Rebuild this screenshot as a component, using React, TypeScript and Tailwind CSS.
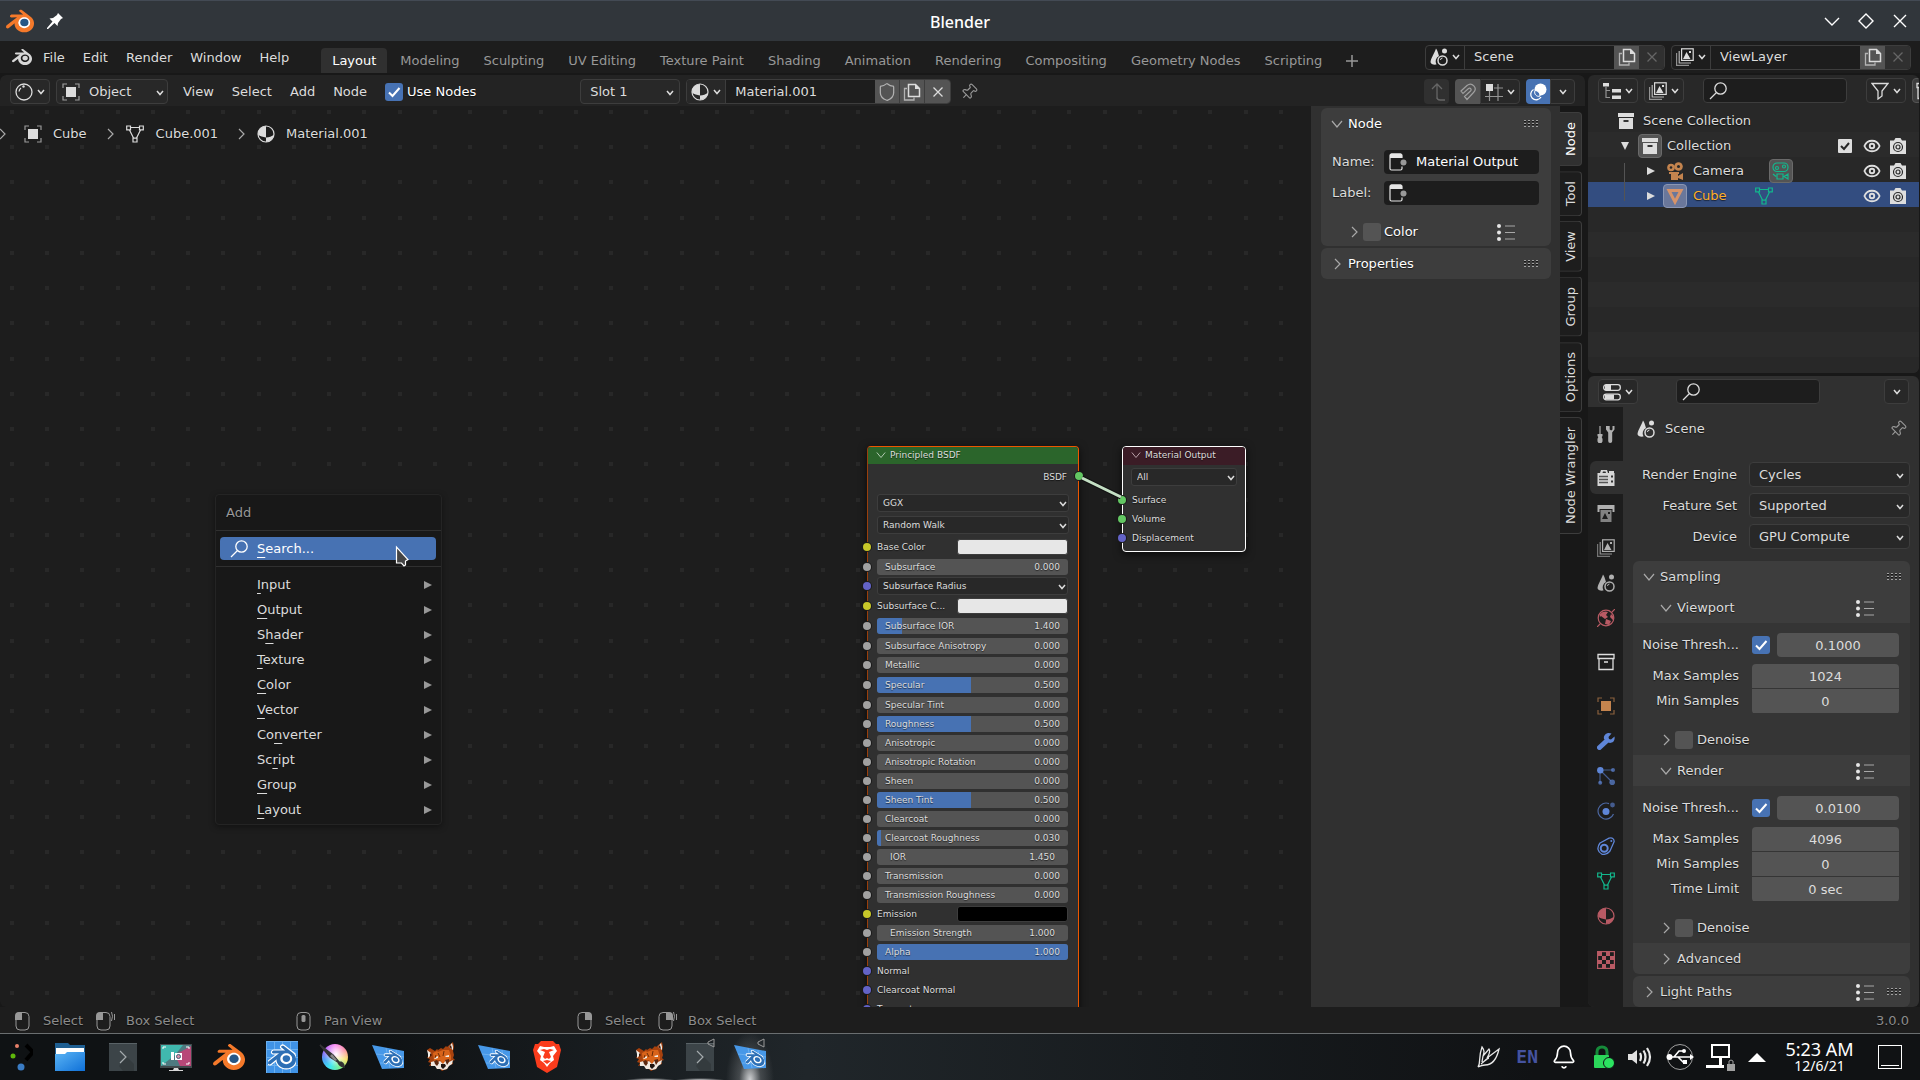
import type { ReactNode } from "react";
import { SiBlender } from "react-icons/si";
import { Shield, Pin, Bell, Eye } from "lucide-react";

type IconProps = { className?: string };

function Svg({ className = "", children }: { className?: string; children: ReactNode }) {
  return (
    <svg
      viewBox="0 0 18 18"
      fill="none"
      stroke="currentColor"
      className={`size-[18px] shrink-0 ${className}`}
      aria-hidden="true"
    >
      {children}
    </svg>
  );
}

/* ---------- icons ---------- */

const Chevron = ({ className = "" }: IconProps) => (
  <svg viewBox="0 0 8 6" fill="none" stroke="currentColor" strokeWidth="1.5" className={`h-[6px] w-2 shrink-0 ${className}`} aria-hidden="true">
    <path d="M1 1l3 3.5L7 1" />
  </svg>
);

const Fold = ({ open, className = "" }: { open?: boolean; className?: string }) => (
  <svg viewBox="0 0 12 12" fill="none" stroke="currentColor" strokeWidth="1.2" className={`size-3 shrink-0 text-[#a8a8a8] ${className}`} aria-hidden="true">
    <path d={open ? "M1 3l5 6 5-6" : "M4 1l5 5-5 5"} />
  </svg>
);

const Triangle = ({ className = "" }: IconProps) => (
  <svg viewBox="0 0 8 8" className={`size-2 shrink-0 fill-current ${className}`} aria-hidden="true">
    <path d="M0 0l8 4-8 4z" />
  </svg>
);

const Grip = () => (
  <svg viewBox="0 0 15 7" className="h-[7px] w-[15px] shrink-0" aria-hidden="true">
    {[0, 4, 8, 12].map((x) => (
      <g key={x}>
        <path d={`M${x} 0h2v1h-2zM${x} 3h2v1h-2zM${x} 6h2v1h-2z`} fill="#a0a0a0" />
        <path d={`M${x} 1h2v1h-2zM${x} 4h2v1h-2z`} fill="#151515" />
      </g>
    ))}
  </svg>
);

const Presets = () => (
  <Svg className="text-[#a8a8a8]">
    <path d="M8 3h10M8 9.500h10M8 16h10" strokeWidth="1.2" />
    <g fill="#e6e6e6" stroke="none">
      <circle cx="2" cy="3" r="2" />
      <circle cx="2" cy="9.500" r="2" />
      <circle cx="2" cy="16" r="2" />
    </g>
  </Svg>
);

const ObjectIcon = ({ className = "" }: IconProps) => (
  <Svg className={className}>
    <path d="M1 5V1h4M13 1h4v4M17 13v4h-4M5 17H1v-4" strokeOpacity=".65" strokeWidth="1.2" />
    <rect x="4" y="4" width="10" height="10" fill="currentColor" stroke="none" />
  </Svg>
);

const MeshIcon = ({ className = "" }: IconProps) => (
  <Svg className={className}>
    <path d="M5 2.500h8M3.500 5L7.500 13M14.500 5L10.500 13" strokeWidth="1.200" />
    <path d="M.7 1h3.800v3.800H.7zM13.500 1h3.800v3.800h-3.800zM7 13.200h4V17H7z" strokeWidth="1.200" />
  </Svg>
);

const MaterialIcon = ({ className = "" }: IconProps) => (
  <Svg className={className}>
    <circle cx="9" cy="9" r="8" strokeWidth="1.200" />
    <path d="M9 1v11.500C6 12 3 11.500 1 9.500A8 8 0 0 1 9 1zM9 12.500c3-.3 6-.8 8-3A8 8 0 0 1 9 17z" fill="currentColor" stroke="none" />
  </Svg>
);

const SceneIcon = ({ className = "" }: IconProps) => (
  <Svg className={className}>
    <g fill="currentColor" stroke="none">
      <path d="M6 .5C4.500 5 1 10 .5 14c0 2 3 3 6 2.500A6 6 0 0 1 9 8C8 5 7.500 2 6 .5z" />
      <circle cx="14.500" cy="3" r="2.500" />
    </g>
    <circle cx="12.500" cy="12.500" r="4.500" strokeWidth="1.500" />
    <path d="M10.500 12a2 2 0 0 1 2-2" />
  </Svg>
);

const LayersIcon = ({ className = "" }: IconProps) => (
  <Svg className={className}>
    <path d="M.6 5v12.400H13" strokeOpacity=".6" strokeWidth="1.200" />
    <path d="M3.200 3v12H15" strokeOpacity=".8" strokeWidth="1.200" />
    <rect x="5.600" y=".8" width="11.600" height="11.600" strokeWidth="1.200" />
    <path d="M7 11l3.500-7 4 7zM13 3h2v2h-2z" fill="currentColor" stroke="none" />
  </Svg>
);

const CopyIcon = ({ className = "" }: IconProps) => (
  <Svg className={className}>
    <path d="M4 5.500H1.500v11.500H11v-2.500" strokeOpacity=".7" strokeWidth="1.300" />
    <path d="M5.500 1.500h7l4 4v8h-11z" strokeWidth="1.500" />
    <path d="M12 1v5h5z" fill="currentColor" stroke="none" />
  </Svg>
);

const CloseIcon = ({ className = "" }: IconProps) => (
  <Svg className={className}>
    <path d="M4.500 4.500l9 9M13.500 4.500l-9 9" strokeWidth="1.300" />
  </Svg>
);

const SearchIcon = ({ className = "" }: IconProps) => (
  <Svg className={className}>
    <circle cx="11.500" cy="6.500" r="5.700" strokeWidth="1.300" />
    <path d="M7.500 10.500L1 17" strokeWidth="1.300" />
  </Svg>
);

const BoxIcon = ({ className = "" }: IconProps) => (
  <Svg className={className}>
    <path d="M1 1h16v4H1zM2 6h14v11H2z" fill="currentColor" stroke="none" />
    <path d="M6.500 9h5" stroke="#333" strokeWidth="2" />
  </Svg>
);

const BoxOutlineIcon = ({ className = "" }: IconProps) => (
  <Svg className={className}>
    <path d="M1 1.500h16v4H1zM2 5.500h14v11H2zM7 9h4" strokeWidth="1.300" />
  </Svg>
);

const NodeIcon = () => (
  <Svg className="text-[#e6e6e6]">
    <path d="M13 5v-2.500q0-1.500-1.500-1.500h-9q-1.500 0-1.500 1.500v13q0 1.500 1.500 1.500h9q1.500 0 1.500-1.500v-2" strokeWidth="1.200" />
    <path d="M1 5V2q0-1.500 1.500-1.500h9Q13 .5 13 2v3z" fill="currentColor" stroke="none" />
    <circle cx="14.500" cy="9.500" r="3" fill="#999" stroke="none" />
  </Svg>
);

const ShaderIcon = () => (
  <Svg>
    <circle cx="9" cy="9" r="8" strokeWidth="1.300" />
    <path d="M4 8.500A5.500 5.500 0 0 1 6 5" strokeWidth="1.300" />
    <circle cx="8.500" cy="3.500" r="1.200" fill="currentColor" stroke="none" />
  </Svg>
);

const MagnetIcon = () => (
  <Svg className="text-[#a0a0a0]">
    <path d="M2 8l6-5.500c5-4 11 2.500 6.500 7L8 16.500l-2.500-3 6-5.500c1.500-1.500 0-3.500-2-2.500L4 10.500z" strokeWidth="1.200" />
  </Svg>
);

const SnapIcon = () => (
  <Svg>
    <path d="M4.500 7v11M13 1v17M0 13.500h18M9 5h9" strokeOpacity=".6" strokeWidth="1.200" />
    <rect x="1" y="1" width="7" height="7" fill="currentColor" stroke="none" />
  </Svg>
);

const OverlayIcon = () => (
  <Svg className="text-white">
    <circle cx="11.500" cy="6.500" r="6" fill="currentColor" stroke="none" />
    <path d="M4.500 6.500a5.500 5.500 0 1 0 7.500 7.500" strokeWidth="1.300" />
    <path d="M6 7.500a5 5 0 0 1 5 5.500c-3 1.500-6.500-2-5-5.500z" fill="#4772b3" stroke="#fff" />
  </Svg>
);

const TreeIcon = () => (
  <Svg>
    <path d="M3 5v10.500h4M3 8.500h4" strokeOpacity=".6" strokeWidth="1.200" />
    <path d="M0 1h6v3.500H0zM9 7h9v3.500H9zM9 13.500h9V17H9z" fill="currentColor" stroke="none" />
  </Svg>
);

const FilterIcon = () => (
  <Svg>
    <path d="M1 1.500h16L11 9v5l-4 3V9z" strokeWidth="1.300" />
  </Svg>
);

const TogglesIcon = () => (
  <Svg>
    <rect x=".7" y="1.700" width="16.600" height="5.600" rx="2.500" strokeWidth="1.300" />
    <rect x=".7" y="11.200" width="16.600" height="5.600" rx="2.500" strokeWidth="1.300" />
    <path d="M2 2h6v5H2zM2 11.500h9v5H2z" fill="currentColor" stroke="none" />
  </Svg>
);

const PhotoIcon = () => (
  <Svg className="text-[#dedede]">
    <path d="M1 3.500h4L6.500 1h5L13 3.500h4v13.500H1z" fill="currentColor" stroke="none" />
    <circle cx="9" cy="10" r="4.500" stroke="#2b2b2b" strokeWidth="1.200" />
    <circle cx="9" cy="10" r="2" stroke="#2b2b2b" strokeWidth="1.200" />
  </Svg>
);

const MovieIcon = ({ outline, className = "" }: { outline?: boolean; className?: string }) => (
  <Svg className={className}>
    {outline ? (
      <g strokeWidth="1.200">
        <rect x="1" y="1" width="15" height="8.500" rx="4" />
        <circle cx="5" cy="6" r="1.500" />
        <circle cx="12" cy="4.500" r="1.500" />
        <path d="M5 12h6v5H5zM12 14.500l4-2.500v5zM1 12l3 2.500" />
      </g>
    ) : (
      <g fill="currentColor" stroke="none">
        <circle cx="5" cy="5.500" r="3.800" />
        <circle cx="12.500" cy="4.500" r="4.300" />
        <path d="M3 10h10v2h-1v2l5-3v7l-5-2v2H5v-6H3z" />
        <circle cx="5" cy="5.500" r="1.300" fill="#282828" />
        <circle cx="12.500" cy="4.500" r="1.500" fill="#282828" />
      </g>
    )}
  </Svg>
);

const ToolIcon = () => (
  <Svg>
    <path d="M3 1v8" strokeWidth="1.200" />
    <path d="M.5 9h5v2l-.8 1q1.300 1.500.8 4.500l-1 1.500h-3L.5 16.500Q0 13.500 1.300 12l-.8-1zM9 1v3.500l2.200 3V16q0 2 2 2t2-2V7.500l2.300-3V1l-2 0v3.500l-1.300 1-1.500-1V1z" fill="currentColor" stroke="none" />
  </Svg>
);

const RenderIcon = () => (
  <Svg className="text-[#d6d6d6]">
    <path d="M.5 4h2.500l1-3h6l1 3h1V2h5v2h.5v13H.5z" fill="currentColor" stroke="none" />
    <path d="M5.500 4l.5-1.500h2.500l.5 1.500z" fill="#303030" stroke="none" />
    <path d="M2 7.500h9M2 10.500h9M2 13.500h9" stroke="#555" strokeWidth="1.500" />
    <path d="M14 6.500h2v2h-2zM14 11.500h2v2h-2z" fill="#333" stroke="none" />
  </Svg>
);

const OutputIcon = () => (
  <Svg>
    <path d="M.5 1h17v7h-2V5h-13v3h-2z" fill="currentColor" stroke="none" />
    <path d="M3.500 6h11v12h-11z" fill="#828282" stroke="none" />
    <path d="M5 15l3-6 3 6zM11 8h2v2h-2z" fill="#1d1d1d" stroke="none" />
  </Svg>
);

const WorldIcon = () => (
  <Svg>
    <circle cx="9" cy="9" r="7.800" strokeWidth="1.200" />
    <path d="M0 18l3-3M15 3l3-3" strokeWidth="1.200" />
    <path d="M3 5c3-3 6-3 8-2l-2 3 2 2-3 2-4-3-1 1zM9 10l5 2-2 4-4-1zM14 5l3 3-1 3-3-3z" fill="currentColor" stroke="none" />
  </Svg>
);

const WrenchIcon = () => (
  <Svg>
    <path d="M2.500 15.500L9 9.500" strokeWidth="5" strokeLinecap="round" />
    <path d="M14.500 1.500l-3 3.500.5 2 2 .5 3.500-3c1 5-3 7.500-6.500 6L7 7c-1-4 3-7.500 7.500-5.500z" fill="currentColor" stroke="none" />
  </Svg>
);

const ParticlesIcon = () => (
  <Svg>
    <path d="M3 6v10M6 3h10M5 5l9 9" strokeOpacity=".6" strokeWidth="1.200" />
    <g fill="currentColor" stroke="none">
      <circle cx="3.300" cy="3.300" r="3.200" />
      <g opacity=".7">
        <circle cx="3.200" cy="15.800" r="2" />
        <circle cx="16" cy="3" r="2" />
        <circle cx="15.200" cy="15.200" r="2.800" />
      </g>
    </g>
  </Svg>
);

const PhysicsIcon = () => (
  <Svg>
    <path d="M12 1.600A8 8 0 1 0 16.500 12" strokeOpacity=".7" strokeWidth="1.200" />
    <circle cx="9" cy="9.500" r="3.500" fill="currentColor" stroke="none" />
    <circle cx="15.500" cy="3" r="2.400" fill="currentColor" fillOpacity=".6" stroke="none" />
  </Svg>
);

const ConstraintIcon = () => (
  <Svg>
    <path d="M3 6l9-4.800q5-1.200 5.200 3.300L13 14q-3 4-8 3.300Q-2 13 3 6z" strokeWidth="1.300" />
    <circle cx="7.200" cy="11.200" r="3.500" strokeWidth="2" />
    <circle cx="14.300" cy="4" r="1" fill="currentColor" stroke="none" />
  </Svg>
);

const TextureIcon = () => (
  <Svg>
    <rect x=".6" y=".6" width="16.800" height="16.800" strokeWidth="1.200" />
    <path
      d="M1 1h4v4H1zM9 1h4v4H9zM5 5h4v4H5zM13 5h4v4h-4zM1 9h4v4H1zM9 9h4v4H9zM5 13h4v4H5zM13 13h4v4h-4z"
      fill="currentColor"
      stroke="none"
    />
  </Svg>
);

/* ---------- shared controls ---------- */

function SelectBox({ label, value, className = "" }: { label: string; value: string; className?: string }) {
  return (
    <div className={`relative h-[25px] rounded border border-[#3d3d3d] bg-[#282828] ${className}`}>
      <select aria-label={label} className="h-full w-full appearance-none bg-transparent pr-5 pl-[9px] outline-none">
        <option>{value}</option>
      </select>
      <Chevron className="pointer-events-none absolute top-[10px] right-[5px]" />
    </div>
  );
}

function IconButton({ label, className = "", children }: { label: string; className?: string; children: ReactNode }) {
  return (
    <button aria-label={label} className={`flex h-[25px] shrink-0 items-center justify-center ${className}`}>
      {children}
    </button>
  );
}

function MenuIconButton({ label, className = "", children }: { label: string; className?: string; children: ReactNode }) {
  return (
    <IconButton label={label} className={`w-10 gap-1 rounded border border-[#3d3d3d] bg-[#282828] ${className}`}>
      {children}
      <Chevron />
    </IconButton>
  );
}

function CheckBox({ id, label, checked }: { id: string; label: string; checked?: boolean }) {
  return (
    <span className="relative size-[18px] shrink-0">
      <input
        id={id}
        type="checkbox"
        aria-label={label}
        defaultChecked={checked}
        className="peer block size-full appearance-none rounded-[3px] bg-[#545454] checked:bg-[#4772b3]"
      />
      <svg viewBox="0 0 18 18" className="pointer-events-none absolute inset-0 hidden peer-checked:block" fill="none" stroke="#fff" strokeWidth="2" aria-hidden="true">
        <path d="M4 9.500l3.500 3.500L14.500 5" />
      </svg>
    </span>
  );
}

function DataBlock({ label, value, icon }: { label: string; value: string; icon: ReactNode }) {
  return (
    <div className="flex h-[25px] w-[240px] overflow-hidden rounded border border-[#3d3d3d] bg-[#1d1d1d]">
      <button aria-label={`Browse ${label}`} className="flex w-[39px] items-center justify-center gap-1 border-r border-[#3d3d3d]">
        {icon}
        <Chevron />
      </button>
      <input aria-label={label} defaultValue={value} className="w-[149px] bg-transparent pl-[9px] outline-none" />
      <button aria-label={`New ${label}`} className="flex w-[25px] items-center justify-center bg-[#545454]">
        <CopyIcon />
      </button>
      <button aria-label={`Remove ${label}`} className="flex w-[25px] items-center justify-center bg-[#303030] text-[#666]">
        <CloseIcon />
      </button>
    </div>
  );
}

/* ---------- window chrome ---------- */

function BlenderLogo({ className = "" }: IconProps) {
  return (
    <span className={`relative block ${className}`}>
      <svg viewBox="0 0 24 24" className="absolute inset-0 size-full" aria-hidden="true">
        <circle cx="15.700" cy="13.400" r="5.500" fill="#fff" />
      </svg>
      <SiBlender className="absolute inset-0 size-full text-[#f5792a]" />
      <svg viewBox="0 0 24 24" className="absolute inset-0 size-full" aria-hidden="true">
        <ellipse cx="15.750" cy="13.360" rx="3.500" ry="3.200" fill="#265787" />
      </svg>
    </span>
  );
}

function TitleBar() {
  return (
    <header className="relative flex h-[41px] items-center justify-between border-t border-[#434a54] bg-[#31363b] px-[6px] font-['Noto_Sans',sans-serif] text-white">
      <div className="flex items-center gap-[13px]">
        <BlenderLogo className="size-7" />
        <svg viewBox="0 0 16 16" className="size-4 fill-white" aria-hidden="true">
          <path d="M11 0l5 5-2 1-3 4-.5 3-3-3L1 16l-1 0 0-1 5.500-6.500-3-3L6 5l4-3z" />
        </svg>
      </div>
      <h1 className="absolute inset-x-0 pt-[2px] text-center text-base font-medium">Blender</h1>
      <div className="relative flex items-center gap-[18px] pr-[6px]">
        {[
          ["Minimize", "M1 5l7 7 7-7"],
          ["Maximize", "M8 1l7 7-7 7-7-7z"],
          ["Close", "M2 2l12 12M14 2L2 14"],
        ].map(([label, d]) => (
          <button key={label} aria-label={label}>
            <svg viewBox="0 0 16 16" className="size-4" fill="none" stroke="#fff" strokeWidth="1.400">
              <path d={d} />
            </svg>
          </button>
        ))}
      </div>
    </header>
  );
}

const MENUS = ["File", "Edit", "Render", "Window", "Help"];
const WORKSPACES = [
  "Layout",
  "Modeling",
  "Sculpting",
  "UV Editing",
  "Texture Paint",
  "Shading",
  "Animation",
  "Rendering",
  "Compositing",
  "Geometry Nodes",
  "Scripting",
];

function TopBar() {
  return (
    <div className="flex h-8 items-center justify-between pr-[9px] pl-3">
      <div className="flex h-full items-center">
        <SiBlender className="mr-[2px] size-5 text-[#d8d8d8]" />
        <nav className="flex pt-[2px]">
          {MENUS.map((m) => (
            <button key={m} className="px-[9px]">
              {m}
            </button>
          ))}
        </nav>
        <div className="ml-[23px] flex h-full items-end gap-[2px]">
          {WORKSPACES.map((w, i) => (
            <button
              key={w}
              className={`h-[25px] rounded-t px-[11px] ${i === 0 ? "bg-[#303030] text-white" : "text-[#989898]"}`}
            >
              {w}
            </button>
          ))}
          <button aria-label="Add workspace" className="flex h-[25px] w-[34px] items-center justify-center text-[#989898]">
            <svg viewBox="0 0 12 12" className="size-3" stroke="currentColor" strokeWidth="1.500">
              <path d="M6 0v12M0 6h12" />
            </svg>
          </button>
        </div>
      </div>
      <div className="flex gap-[6px]">
        <DataBlock label="Scene" value="Scene" icon={<SceneIcon />} />
        <DataBlock label="View layer" value="ViewLayer" icon={<LayersIcon />} />
      </div>
    </div>
  );
}

/* ---------- shader editor ---------- */

function EditorHeader() {
  return (
    <div className="flex h-[31px] items-start justify-between rounded-t-md bg-[#232323] px-[10px] pt-1">
      <div className="flex items-center">
        <MenuIconButton label="Editor type">
          <ShaderIcon />
        </MenuIconButton>
        <div className="relative ml-[6px] h-[25px] w-28 rounded border border-[#3d3d3d] bg-[#282828]">
          <ObjectIcon className="pointer-events-none absolute top-[3px] left-[5px]" />
          <select aria-label="Shader type" className="h-full w-full appearance-none bg-transparent pl-8 outline-none">
            <option>Object</option>
          </select>
          <Chevron className="pointer-events-none absolute top-[10px] right-[3px]" />
        </div>
        <nav className="ml-[6px] flex">
          {["View", "Select", "Add", "Node"].map((m) => (
            <button key={m} className="px-[9px]">
              {m}
            </button>
          ))}
        </nav>
        <div className="ml-[9px] flex items-center gap-1 text-white">
          <CheckBox id="use-nodes" label="Use Nodes" checked />
          <label htmlFor="use-nodes">Use Nodes</label>
        </div>
        <SelectBox label="Material slot" value="Slot 1" className="ml-[104px] w-[100px]" />
        <div className="ml-[6px] flex h-[25px] overflow-hidden rounded border border-[#3d3d3d] bg-[#1d1d1d]">
          <button aria-label="Browse material" className="flex w-[39px] items-center justify-center gap-1 border-r border-[#3d3d3d] bg-[#282828]">
            <MaterialIcon />
            <Chevron />
          </button>
          <input aria-label="Material name" defaultValue="Material.001" className="w-[149px] bg-transparent pl-[9px] outline-none" />
          <div className="flex divide-x divide-[#3d3d3d] bg-[#545454]">
            <button aria-label="Fake user" className="flex w-[25px] items-center justify-center text-[#b0b0b0]">
              <Shield size={20} strokeWidth={1.5} />
            </button>
            <button aria-label="New material" className="flex w-[25px] items-center justify-center">
              <CopyIcon />
            </button>
            <button aria-label="Unlink material" className="flex w-[25px] items-center justify-center">
              <CloseIcon />
            </button>
          </div>
        </div>
        <IconButton label="Pin" className="ml-[9px] text-[#989898]">
          <Pin size={18} strokeWidth={1.5} className="rotate-45" />
        </IconButton>
      </div>
      <div className="flex">
        <IconButton label="Parent node tree" className="w-[25px] rounded bg-[#303030] text-[#666]">
          <Svg>
            <path d="M9 16V1M4 6l5-5 5 5M9 11v3q0 3 3 3h5" strokeWidth="1.300" />
          </Svg>
        </IconButton>
        <IconButton label="Snap" className="ml-[6px] w-[25px] rounded-l bg-[#545454]">
          <MagnetIcon />
        </IconButton>
        <IconButton label="Snap target" className="w-10 gap-1 rounded-r border border-[#3d3d3d] bg-[#282828]">
          <SnapIcon />
          <Chevron />
        </IconButton>
        <IconButton label="Overlays" className="ml-[6px] w-6 rounded-l bg-[#4772b3]">
          <OverlayIcon />
        </IconButton>
        <IconButton label="Overlay options" className="w-[25px] rounded-r border border-[#3d3d3d] bg-[#282828]">
          <Chevron />
        </IconButton>
      </div>
    </div>
  );
}

function CanvasDots() {
  return (
    <svg className="absolute inset-0 size-full" aria-hidden="true">
      <defs>
        <pattern id="dots" x="10" y="4" width="141" height="141" patternUnits="userSpaceOnUse">
          {[0, 35, 70, 106].map((x) =>
            [0, 35, 70, 106].map((y) => <rect key={`${x}-${y}`} x={x} y={y} width="4" height="4" fill="#282828" />)
          )}
        </pattern>
      </defs>
      <rect width="100%" height="100%" fill="url(#dots)" />
    </svg>
  );
}

function Breadcrumb() {
  return (
    <div className="absolute top-[18px] left-0 flex h-5 items-center">
      <Fold className="-ml-1 text-[#a8a8a8]" />
      <ObjectIcon className="mr-[11px] ml-4" />
      Cube
      <Fold className="mr-[10px] ml-[17px]" />
      <MeshIcon className="mr-3" />
      Cube.001
      <Fold className="mr-[10px] ml-[17px]" />
      <MaterialIcon className="mr-[11px]" />
      Material.001
    </div>
  );
}

const SOCKET = {
  yellow: "bg-[#c7c729]",
  gray: "bg-[#a1a1a1]",
  violet: "bg-[#6363c7]",
  green: "bg-[#63c763]",
};

function Socket({ color, side = "left" }: { color: keyof typeof SOCKET; side?: "left" | "right" }) {
  return (
    <span
      className={`absolute top-1/2 size-2 -translate-y-1/2 rounded-full ring-1 ring-[#1a1a1a] ${SOCKET[color]} ${
        side === "left" ? "-left-[5px]" : "-right-[5px]"
      }`}
    />
  );
}

type Row = {
  kind: "slider" | "number" | "color" | "select" | "plain";
  name: string;
  socket: keyof typeof SOCKET;
  value?: string;
  fill?: number;
  swatch?: string;
  tall?: boolean;
};

const ROWS: Row[] = [
  { kind: "color", name: "Base Color", socket: "yellow", swatch: "#e7e7e7", tall: true },
  { kind: "slider", name: "Subsurface", socket: "gray", value: "0.000", fill: 0 },
  { kind: "select", name: "Subsurface Radius", socket: "violet", tall: true },
  { kind: "color", name: "Subsurface C...", socket: "yellow", swatch: "#e7e7e7", tall: true },
  { kind: "slider", name: "Subsurface IOR", socket: "gray", value: "1.400", fill: 13, tall: true },
  { kind: "slider", name: "Subsurface Anisotropy", socket: "gray", value: "0.000", fill: 0 },
  { kind: "slider", name: "Metallic", socket: "gray", value: "0.000", fill: 0, tall: true },
  { kind: "slider", name: "Specular", socket: "gray", value: "0.500", fill: 49, tall: true },
  { kind: "slider", name: "Specular Tint", socket: "gray", value: "0.000", fill: 0 },
  { kind: "slider", name: "Roughness", socket: "gray", value: "0.500", fill: 49 },
  { kind: "slider", name: "Anisotropic", socket: "gray", value: "0.000", fill: 0 },
  { kind: "slider", name: "Anisotropic Rotation", socket: "gray", value: "0.000", fill: 0 },
  { kind: "slider", name: "Sheen", socket: "gray", value: "0.000", fill: 0 },
  { kind: "slider", name: "Sheen Tint", socket: "gray", value: "0.500", fill: 49 },
  { kind: "slider", name: "Clearcoat", socket: "gray", value: "0.000", fill: 0 },
  { kind: "slider", name: "Clearcoat Roughness", socket: "gray", value: "0.030", fill: 2 },
  { kind: "number", name: "IOR", socket: "gray", value: "1.450" },
  { kind: "slider", name: "Transmission", socket: "gray", value: "0.000", fill: 0 },
  { kind: "slider", name: "Transmission Roughness", socket: "gray", value: "0.000", fill: 0 },
  { kind: "color", name: "Emission", socket: "yellow", swatch: "#000000" },
  { kind: "number", name: "Emission Strength", socket: "gray", value: "1.000" },
  { kind: "slider", name: "Alpha", socket: "gray", value: "1.000", fill: 100 },
  { kind: "plain", name: "Normal", socket: "violet" },
  { kind: "plain", name: "Clearcoat Normal", socket: "violet" },
  { kind: "plain", name: "Tangent", socket: "violet" },
];

function NodeSelect({ label, value, className = "" }: { label: string; value: string; className?: string }) {
  return (
    <div className={`relative h-[18px] rounded-[3px] border border-[#3d3d3d] bg-[#282828] ${className}`}>
      <select aria-label={label} className="block h-4 w-full appearance-none bg-transparent pl-[5px] outline-none">
        <option>{value}</option>
      </select>
      <Chevron className="pointer-events-none absolute top-[6px] right-[1px]" />
    </div>
  );
}

function NodeRow({ row }: { row: Row }) {
  return (
    <div className={`relative flex items-center pr-[10px] pl-[9px] ${row.tall ? "h-5" : "h-[19px]"}`}>
      <Socket color={row.socket} />
      {row.kind === "plain" && <span>{row.name}</span>}
      {row.kind === "select" && <NodeSelect label={row.name} value={row.name} className="w-full" />}
      {row.kind === "color" && (
        <>
          <span className="flex-1">{row.name}</span>
          <button
            aria-label={row.name}
            className="h-4 w-[111px] rounded-[3px] border border-[#3d3d3d]"
            style={{ background: row.swatch }}
          />
        </>
      )}
      {(row.kind === "slider" || row.kind === "number") && (
        <div className="relative flex h-4 w-full items-center overflow-hidden rounded-[3px] bg-[#545454]">
          {row.fill ? <span className="absolute inset-y-0 left-0 bg-[#4772b3]" style={{ width: `${row.fill}%` }} /> : null}
          <span className={`relative flex w-full justify-between ${row.kind === "number" ? "px-[13px]" : "px-2"}`}>
            <span>{row.name}</span>
            <span>{row.value}</span>
          </span>
          <input
            type="range"
            aria-label={row.name}
            min="0"
            max="1"
            step="0.001"
            defaultValue={row.value}
            className="absolute inset-0 w-full opacity-0"
          />
        </div>
      )}
    </div>
  );
}

function PrincipledNode() {
  return (
    <section className="absolute top-[340px] left-[867px] w-[212px] rounded-[4px] border border-[#ed5700] border-l-[#9a3f0c] bg-[#303030] text-[9px] leading-3 shadow-[0_2px_8px_#000a]">
      <h2 className="flex h-[17px] items-center gap-1 rounded-t-[3px] bg-[#2b652b] pb-[2px] pl-2">
        <Fold open className="size-[10px] text-[#b0c8b0]" />
        Principled BSDF
      </h2>
      <div className="relative h-6 pt-[7px] pr-[11px] text-right">
        BSDF
        <Socket color="green" side="right" />
      </div>
      <div className="flex flex-col gap-1 px-[9px] pt-[6px] pb-[3px]">
        <NodeSelect label="Distribution" value="GGX" />
        <NodeSelect label="Subsurface method" value="Random Walk" />
      </div>
      {ROWS.map((r) => (
        <NodeRow key={r.name} row={r} />
      ))}
    </section>
  );
}

function OutputNode() {
  return (
    <section className="absolute top-[340px] left-[1122px] w-[124px] rounded-[4px] border border-white bg-[#303030] pb-1 text-[9px] leading-3 shadow-[0_2px_8px_#000a]">
      <h2 className="flex h-[18px] items-center gap-1 rounded-t-[3px] bg-[#3b1c26] pb-[2px] pl-2">
        <Fold open className="size-[10px] text-[#b8a0a8]" />
        Material Output
      </h2>
      <div className="px-2 pt-[3px] pb-1">
        <NodeSelect label="Target" value="All" />
      </div>
      {(["Surface", "Volume", "Displacement"] as const).map((s) => (
        <div key={s} className="relative flex h-[19px] items-center pl-[9px]">
          <Socket color={s === "Displacement" ? "violet" : "green"} />
          {s}
        </div>
      ))}
    </section>
  );
}

const ADD_ITEMS: [string, string, string][] = [
  ["", "I", "nput"],
  ["", "O", "utput"],
  ["S", "h", "ader"],
  ["", "T", "exture"],
  ["", "C", "olor"],
  ["", "V", "ector"],
  ["Co", "n", "verter"],
  ["Sc", "r", "ipt"],
  ["", "G", "roup"],
  ["", "L", "ayout"],
];

const Accel = ({ children }: { children: ReactNode }) => (
  <span className="underline decoration-1 underline-offset-4 [text-decoration-skip-ink:none]">{children}</span>
);

function AddMenu() {
  return (
    <div className="absolute top-[388px] left-[215px] w-[227px] rounded border border-[#242424] bg-[#181818] pb-[2px] shadow-[0_2px_6px_#0006]">
      <p className="flex h-9 items-center border-b border-[#303030] pl-[10px] text-[#989898]">Add</p>
      <div className="border-b border-[#303030] py-[6px] pr-[5px] pl-1">
        <button className="flex h-[23px] w-full items-center rounded bg-[#4772b3] pl-[10px] text-white">
          <SearchIcon className="mr-[9px]" />
          <span>
            <Accel>S</Accel>earch...
          </span>
        </button>
      </div>
      <ul className="pt-[5px]">
        {ADD_ITEMS.map(([pre, key, post]) => (
          <li key={pre + key + post}>
            <button className="flex h-[25px] w-full items-center justify-between pr-[9px] pl-[41px]">
              <span>
                {pre}
                <Accel>{key}</Accel>
                {post}
              </span>
              <Triangle className="text-[#989898]" />
            </button>
          </li>
        ))}
      </ul>
    </div>
  );
}

const SIDE_TABS = ["Node", "Tool", "View", "Group", "Options", "Node Wrangler"];

function SidePanel() {
  return (
    <aside className="relative flex">
      <div className="w-[249px] bg-[#303030] pt-[2px] pr-[9px] pl-[10px]">
        <section className="h-[138px] rounded-md bg-[#3d3d3d] pr-3">
          <h2 className="flex h-[31px] items-center gap-[5px] pl-[10px] text-white">
            <Fold open />
            <span className="flex-1">Node</span>
            <Grip />
          </h2>
          <div className="pt-[7px]">
            {[
              ["Name:", "Material Output"],
              ["Label:", ""],
            ].map(([label, value]) => (
              <div key={label} className="flex h-[31px] items-center pl-[11px]">
                <label htmlFor={`node-${label}`} className="w-[52px]">
                  {label}
                </label>
                <div className="flex h-6 flex-1 items-center rounded bg-[#1d1d1d] pl-[5px]">
                  <NodeIcon />
                  <input id={`node-${label}`} defaultValue={value} className="w-[120px] bg-transparent pl-[9px] text-white outline-none" />
                </div>
              </div>
            ))}
          </div>
          <div className="flex h-11 items-center pt-1 pl-[27px] text-white">
            <Fold className="mr-[3px]" />
            <CheckBox id="node-color" label="Color" />
            <label htmlFor="node-color" className="flex-1 pl-[3px]">
              Color
            </label>
            <span className="mr-6">
              <Presets />
            </span>
          </div>
        </section>
        <section className="mt-[2px] h-[31px] rounded-md bg-[#3d3d3d] pr-3">
          <h2 className="flex h-full items-center gap-[5px] pl-[10px] text-white">
            <Fold />
            <span className="flex-1">Properties</span>
            <Grip />
          </h2>
        </section>
      </div>
      <div className="flex w-[25px] flex-col items-start gap-[5px] bg-[#181818] pt-[6px]">
        {SIDE_TABS.map((t, i) => (
          <button
            key={t}
            className={`w-[22px] rotate-180 rounded-l border border-r-0 border-[#3d3d3d] pt-[9px] pb-[9px] text-center [writing-mode:vertical-rl] ${
              i === 0 ? "bg-[#303030] text-white" : "bg-[#1d1d1d]"
            }`}
          >
            {t}
          </button>
        ))}
      </div>
    </aside>
  );
}

function ShaderEditor() {
  return (
    <main className="flex min-w-0 flex-1 flex-col overflow-hidden rounded-md">
      <EditorHeader />
      <div className="relative flex min-h-0 flex-1 justify-end overflow-hidden bg-[#1d1d1d]">
        <CanvasDots />
        <Breadcrumb />
        <PrincipledNode />
        <OutputNode />
        <svg viewBox="0 0 44 24" className="absolute top-[370px] left-[1079px] h-6 w-11" aria-hidden="true">
          <path d="M3 2L42 21" stroke="#111" strokeWidth="5" />
          <path d="M3 2L42 21" stroke="#c4dfc4" strokeWidth="3" />
        </svg>
        <AddMenu />
        <svg viewBox="0 0 14 22" className="absolute top-[439px] left-[395px] h-[22px] w-[14px]" aria-hidden="true">
          <path d="M1.500 2v16h5l2.500 3 1.500-1V16l2.500-1.500z" fill="#444" stroke="#fff" strokeWidth="1.200" />
        </svg>
        <SidePanel />
      </div>
    </main>
  );
}

/* ---------- outliner ---------- */

const RowToggles = ({ check }: { check?: boolean }) => (
  <span className="ml-auto flex items-center gap-2 pr-3">
    {check && (
      <svg viewBox="0 0 14 14" className="mr-[3px] size-[14px]" aria-hidden="true">
        <rect width="14" height="14" rx="1" fill="#dedede" />
        <path d="M3 7l3 3 5-6" fill="none" stroke="#282828" strokeWidth="2" />
      </svg>
    )}
    <Eye size={18} strokeWidth={2.5} className="text-[#dedede]" />
    <PhotoIcon />
  </span>
);

function Outliner() {
  return (
    <section className="flex h-[298px] flex-col overflow-hidden rounded-md bg-[#282828]">
      <div className="flex h-8 shrink-0 items-start pt-[3px] pl-[10px]">
        <MenuIconButton label="Outliner editor type">
          <TreeIcon />
        </MenuIconButton>
        <MenuIconButton label="Display mode" className="ml-[6px]">
          <LayersIcon />
        </MenuIconButton>
        <label className="ml-[19px] flex h-[25px] w-[144px] shrink-0 items-center rounded border border-[#3d3d3d] bg-[#1d1d1d] pl-[5px]">
          <SearchIcon />
          <input aria-label="Filter outliner" className="w-[110px] bg-transparent outline-none" />
        </label>
        <MenuIconButton label="Filter" className="ml-[19px]">
          <FilterIcon />
        </MenuIconButton>
        <IconButton label="New collection" className="ml-[6px] w-[25px] rounded border border-[#545454] bg-[#3d3d3d]">
          <BoxOutlineIcon />
        </IconButton>
      </div>
      <div className="relative flex-1 bg-[repeating-linear-gradient(#282828_0_25px,#2b2b2b_25px_50px)]">
        <div className="flex h-[25px] items-center pt-[2px] pl-[29px]">
          <BoxIcon className="mr-2" />
          Scene Collection
        </div>
        <div className="flex h-[25px] items-center pt-[2px] pl-[33px]">
          <Triangle className="mr-[9px] rotate-90" />
          <span className="mr-[5px] rounded border border-[#6a6a6a] bg-[#545454] p-[2px]">
            <BoxIcon />
          </span>
          Collection
          <RowToggles check />
        </div>
        <div className="flex h-[25px] items-center pt-[2px] pl-[59px]">
          <Triangle className="mr-[11px]" />
          <MovieIcon className="mr-[9px] text-[#c4844e]" />
          <span className="w-[76px]">Camera</span>
          <span className="rounded border border-[#6a6a6a] bg-[#545454] p-[2px] text-[#12b88d]">
            <MovieIcon outline />
          </span>
          <RowToggles />
        </div>
        <div className="flex h-[25px] items-center bg-[#334d80] pt-[2px] pl-[59px]">
          <Triangle className="mr-2" />
          <span className="mr-[6px] rounded border border-[#8a96b4] bg-[#6a779b] p-[2px] text-[#d6936a]">
            <Svg>
              <path d="M3 3.500h12L9 15z" strokeWidth="3" />
            </Svg>
          </span>
          <span className="w-[62px] text-[#ffaf29]">Cube</span>
          <MeshIcon className="text-[#12b88d]" />
          <RowToggles />
        </div>
        <span className="absolute top-14 left-9 h-[38px] w-px bg-[#545454]" />
      </div>
    </section>
  );
}

/* ---------- properties editor ---------- */

const TAB_GROUPS: { icon: ReactNode; label: string; color: string; active?: boolean }[][] = [
  [{ icon: <ToolIcon />, label: "Tool", color: "text-[#b0b0b0]" }],
  [
    { icon: <RenderIcon />, label: "Render", color: "text-[#d6d6d6]", active: true },
    { icon: <OutputIcon />, label: "Output", color: "text-[#b0b0b0]" },
    { icon: <LayersIcon />, label: "View layer", color: "text-[#b0b0b0]" },
    { icon: <SceneIcon />, label: "Scene", color: "text-[#b0b0b0]" },
    { icon: <WorldIcon />, label: "World", color: "text-[#b85a64]" },
  ],
  [{ icon: <BoxOutlineIcon />, label: "Collection", color: "text-[#dedede]" }],
  [
    { icon: <ObjectIcon />, label: "Object", color: "text-[#c4844e]" },
    { icon: <WrenchIcon />, label: "Modifiers", color: "text-[#5f86d8]" },
    { icon: <ParticlesIcon />, label: "Particles", color: "text-[#5f86d8]" },
    { icon: <PhysicsIcon />, label: "Physics", color: "text-[#5f86d8]" },
    { icon: <ConstraintIcon />, label: "Constraints", color: "text-[#5f86d8]" },
    { icon: <MeshIcon />, label: "Data", color: "text-[#12b88d]" },
    { icon: <MaterialIcon />, label: "Material", color: "text-[#b85a64]" },
  ],
  [{ icon: <TextureIcon />, label: "Texture", color: "text-[#b85a64]" }],
];

function Field({ label, value, className = "" }: { label: string; value: string; className?: string }) {
  return (
    <input
      aria-label={label}
      defaultValue={value}
      className={`h-6 min-w-0 bg-[#545454] text-center outline-none ${className}`}
    />
  );
}

function SamplingGroup({ title, noise, rows }: { title: string; noise: string; rows: [string, string][] }) {
  return (
    <>
      <h3 className="flex h-[31px] items-center gap-[5px] pr-9 pl-[27px]">
        <Fold open />
        <span className="flex-1">{title}</span>
        <Presets />
      </h3>
      <div className="bg-[#353535] pt-[10px] pr-[11px] pb-0.5">
        <div className="flex items-center">
          <label htmlFor={`noise-${title}`} className="w-[106px] text-right">
            Noise Thresh...
          </label>
          <span className="mr-[7px] ml-[13px] flex">
            <CheckBox id={`noise-${title}`} label={`${title} noise threshold`} checked />
          </span>
          <Field label={`${title} noise threshold value`} value={noise} className="flex-1 rounded" />
        </div>
        <div className="mt-[7px] flex">
          <div className="w-[106px] text-right">
            {rows.map(([name]) => (
              <div key={name} className="h-[25px] leading-6">
                {name}
              </div>
            ))}
          </div>
          <div className="ml-[13px] flex flex-1 flex-col gap-px overflow-hidden rounded">
            {rows.map(([name, value]) => (
              <Field key={name} label={`${title} ${name}`} value={value} />
            ))}
          </div>
        </div>
        <div className="mt-[13px] flex h-[26px] items-center pl-[27px]">
          <Fold className="mr-[3px]" />
          <CheckBox id={`denoise-${title}`} label={`${title} denoise`} />
          <label htmlFor={`denoise-${title}`} className="pl-1">
            Denoise
          </label>
        </div>
      </div>
    </>
  );
}

function Properties() {
  return (
    <section className="flex min-h-0 flex-1 flex-col overflow-hidden rounded-md bg-[#303030]">
      <div className="flex h-[31px] shrink-0 items-start justify-between pt-[3px] pr-[10px] pl-[10px]">
        <MenuIconButton label="Properties editor type">
          <TogglesIcon />
        </MenuIconButton>
        <label className="-ml-[26px] flex h-[25px] w-[144px] items-center rounded border border-[#3d3d3d] bg-[#1d1d1d] pl-[5px]">
          <SearchIcon />
          <input aria-label="Search properties" className="w-[110px] bg-transparent outline-none" />
        </label>
        <IconButton label="Options" className="w-[25px] rounded border border-[#3d3d3d] bg-[#282828]">
          <Chevron />
        </IconButton>
      </div>
      <div className="flex min-h-0 flex-1">
        <nav className="flex w-[35px] shrink-0 flex-col gap-[11px] bg-[#1d1d1d] pt-[10px]">
          {TAB_GROUPS.map((group, i) => (
            <div key={i} className="flex flex-col gap-[2px]">
              {group.map((t) => (
                <button
                  key={t.label}
                  aria-label={t.label}
                  className={`ml-[2px] flex h-[33px] items-center justify-center rounded-l-md pr-px ${t.color} ${t.active ? "bg-[#303030]" : ""}`}
                >
                  {t.icon}
                </button>
              ))}
            </div>
          ))}
        </nav>
        <div className="min-w-0 flex-1 overflow-hidden pr-[9px] pl-[10px]">
          <div className="flex h-11 items-center pr-[3px] pl-1">
            <SceneIcon className="mr-[10px]" />
            <span className="flex-1">Scene</span>
            <Pin size={18} strokeWidth={1.5} className="rotate-45 text-[#989898]" />
          </div>
          <div className="flex flex-col gap-[6px] pt-[11px]">
            {[
              ["Render Engine", "Cycles"],
              ["Feature Set", "Supported"],
              ["Device", "GPU Compute"],
            ].map(([label, value]) => (
              <div key={label} className="flex items-center">
                <span className="w-[104px] text-right">{label}</span>
                <SelectBox label={label} value={value} className="ml-3 flex-1" />
              </div>
            ))}
          </div>
          <section className="mt-3 overflow-hidden rounded-md bg-[#3d3d3d]">
            <h2 className="flex h-[31px] items-center gap-[5px] pr-2 pl-[10px]">
              <Fold open />
              <span className="flex-1">Sampling</span>
              <Grip />
            </h2>
            <SamplingGroup
              title="Viewport"
              noise="0.1000"
              rows={[
                ["Max Samples", "1024"],
                ["Min Samples", "0"],
              ]}
            />
            <SamplingGroup
              title="Render"
              noise="0.0100"
              rows={[
                ["Max Samples", "4096"],
                ["Min Samples", "0"],
                ["Time Limit", "0 sec"],
              ]}
            />
            <h3 className="flex h-[31px] items-center gap-[5px] pl-[27px]">
              <Fold />
              Advanced
            </h3>
          </section>
          <section className="mt-[2px] rounded-md bg-[#3d3d3d]">
            <h2 className="flex h-[31px] items-center gap-[5px] pr-2 pl-[10px]">
              <Fold />
              <span className="flex-1">Light Paths</span>
              <Presets />
              <span className="ml-2">
                <Grip />
              </span>
            </h2>
          </section>
        </div>
      </div>
    </section>
  );
}

/* ---------- status bar and desktop panel ---------- */

function Mouse({ button, drag }: { button: "left" | "middle" | "right"; drag?: boolean }) {
  return (
    <svg viewBox="0 0 20 20" className="h-5 w-5 shrink-0" fill="none" stroke="#989898" aria-hidden="true">
      <rect x="1" y="1.500" width="13" height="17.500" rx="4" />
      {button === "left" && <path d="M7 1v8H0V5q0-4 4-4z" fill="#989898" stroke="none" />}
      {button === "middle" && <rect x="5.500" y="4" width="4" height="7" rx="1.500" fill="#989898" stroke="none" />}
      {button === "right" && <path d="M8 1v8h7V5q0-4-4-4z" fill="#989898" stroke="none" />}
      {drag && <path d="M15.500 1q2 4 0 9M18.500 3v6" />}
    </svg>
  );
}

function StatusBar() {
  return (
    <footer className="flex h-[26px] items-center bg-[#1d1d1d] pt-[2px] pr-[11px] pl-[15px] text-[#8c8c8c]">
      <div className="flex w-[281px] items-center">
        <Mouse button="left" />
        <span className="w-[61px] pl-2">Select</span>
        <Mouse button="left" drag />
        <span className="pl-[10px]">Box Select</span>
      </div>
      <div className="flex w-[281px] items-center">
        <Mouse button="middle" />
        <span className="pl-2">Pan View</span>
      </div>
      <div className="flex flex-1 items-center">
        <Mouse button="right" />
        <span className="w-[61px] pl-2">Select</span>
        <Mouse button="right" drag />
        <span className="pl-[10px]">Box Select</span>
      </div>
      <span>3.0.0</span>
    </footer>
  );
}

const Launcher = () => (
  <svg viewBox="0 0 32 32" className="size-8" aria-hidden="true">
    <circle cx="16" cy="5" r="2" fill="#e8816a" />
    <circle cx="12" cy="15" r="2.500" fill="#5fb80c" />
    <circle cx="20" cy="26" r="3.500" fill="#3a7cc4" />
    <path d="M25 4l7 7-7 8" fill="none" stroke="#000" strokeWidth="4" />
  </svg>
);

const Folder = () => (
  <svg viewBox="0 0 32 32" className="size-8" aria-hidden="true">
    <defs>
      <linearGradient id="folder" x1="0" y1="0" x2="1" y2="1">
        <stop offset="0" stopColor="#5bb5f5" />
        <stop offset="1" stopColor="#0f70d8" />
      </linearGradient>
    </defs>
    <path d="M1 2h13l2 2h15v10H1z" fill="#1f5f92" />
    <path d="M2 7h28v8H2z" fill="#fff" />
    <path d="M1 13h10l2-2h18v19H1z" fill="url(#folder)" />
  </svg>
);

const Terminal = () => (
  <svg viewBox="0 0 32 32" className="size-8" aria-hidden="true">
    <path d="M2 2h28v28H2z" fill="#3c4448" />
    <path d="M13 9l14 14v7H16l-4-5 7-9z" fill="#343b3e" />
    <path d="M2 2h28v1H2z" fill="#596266" />
    <path d="M13 10l6 6-6 6" fill="none" stroke="#a5abae" strokeWidth="1.200" />
  </svg>
);

const Monitor = () => (
  <svg viewBox="0 0 32 32" className="size-8" aria-hidden="true">
    <path d="M0 3h32v24H0z" fill="#41494c" />
    <path d="M1 4h30v21H1z" fill="#4e7a80" />
    <path d="M1 4h22l-8 10L1 25z" fill="#40b8ae" />
    <path d="M31 5v20H20l-5-11z" fill="#b84878" />
    <path d="M3 8V6h3M26 6h3v2M29 21v2h-3M6 23H3v-2" fill="none" stroke="#fff" />
    <path d="M11 11h3v8h-3zM15 12h7v7h-7z" fill="#fff" />
    <circle cx="18.500" cy="15.500" r="2" fill="#d890a8" stroke="#40607a" />
    <path d="M14 27h4l1 2h4v1H9v-1h4z" fill="#d8d8d8" />
  </svg>
);

const Blueprint = () => (
  <span className="relative block size-8 bg-[#4093e6] bg-[linear-gradient(#6bb0f0_1px,transparent_1px),linear-gradient(90deg,#6bb0f0_1px,transparent_1px)] bg-[size:8px_8px]">
    <SiBlender className="absolute inset-[2px] size-7 stroke-white stroke-2 text-[#2d6fb5] [paint-order:stroke]" />
  </span>
);

const BlueprintTilted = () => (
  <svg viewBox="0 0 32 32" className="size-8" aria-hidden="true">
    <path d="M0 4l32 6v17l-22 1z" fill="#4798e8" />
    <path d="M4 13l28 3M8 22h24M14 7l4 20M24 9l2 18" stroke="#7ab8f2" strokeWidth=".7" />
    <g transform="translate(8 8) skewX(16)">
      <SiBlender size={19} className="stroke-white stroke-2 text-[#2d6fb5] [paint-order:stroke]" />
    </g>
  </svg>
);

const Krita = () => (
  <span className="relative block size-8">
    <span className="absolute top-[3px] left-[3px] size-[26px] rounded-full bg-[radial-gradient(circle_at_55%_40%,#fff_0,#fff0_60%),conic-gradient(from_0deg,#f970f0,#f87090,#f8e060,#80f090,#40e8f0,#50a0f8,#b060f8,#f970f0)]" />
    <svg viewBox="0 0 32 32" className="absolute inset-0" aria-hidden="true">
      <path d="M1 4L14 14l6 7q5 0 5 5-5-1-6-5L11 16z" fill="#333" stroke="#333" strokeWidth="1.500" />
      <path d="M13 13l5 6-2 1-5-5z" fill="#888" />
    </svg>
  </span>
);

const RedPanda = () => (
  <svg viewBox="0 0 32 32" className="size-8" aria-hidden="true">
    <path d="M2 9l3-2 5 3 2-2 1 1 3-2 2 1 3-3 1 1 6-5 1 5-1 4 1 4-1 3 2 2-3 1 1 3-4 1-2 4-3 1-2 1-2-2-3 0-1-3-3-1-4 1 2-3-3-1 2-3-3-1 2-3-1-3z" fill="#a8420e" />
    <path d="M8 12l4-2 1 1 5-2 6 0 2 6 0 4-5 0-3 4-3-4-6 1z" fill="#d9641a" />
    <path d="M2 9l4 3 0 2-3 3 0-4zM27 2l1 4 0 3-4-3z" fill="#f3eee8" />
    <path d="M5 12l2 2-2 2zM26 4l1 4-3-2z" fill="#401808" />
    <path d="M9 17l4-2 0 2-3 1zM20 15l4-1 0 2-3 0z" fill="#f3eee8" />
    <path d="M6 21l4-1 1 2 4-2 3 3 3-4 3 2 4-2-1 4-3 2-2 3-4 1-3-1-3 0-2-3-4 0z" fill="#f0e8e0" />
    <path d="M9 20l3-1 2 3-2 3-2-2zM20 19l4-1 0 3-2 3z" fill="#5a2810" />
    <path d="M16 23h4l1 2-3 3-2-2z" fill="#201410" />
    <path d="M13 12l2 4M19 10l-1 5M11 14l-1 3" stroke="#6a2c08" />
  </svg>
);

const Brave = () => (
  <svg viewBox="0 0 32 32" className="size-8" aria-hidden="true">
    <path d="M10 0h12l3 3h3l2 6-4 17-10 6-10-6L2 9l2-6h3z" fill="#fb3c1c" />
    <path d="M16 6l-3 0-4-1-3 5 4 5-1 4 4 3 3 4 3-4 4-3-1-4 4-5-3-5-4 1z" fill="#fff" />
    <path d="M9 9l5 2-2 5 2 2 2-1 2 1 2-2-2-5 5-2-4-1-3 1-3-1zM12 20l4-1 4 1-4 3z" fill="#fb3c1c" />
  </svg>
);

const Speaker = () => (
  <svg viewBox="0 0 8 10" className="absolute top-1 right-[10px] h-[10px] w-2" fill="none" stroke="#9a9a9a" aria-hidden="true">
    <path d="M7 1v8L1 6V4z" />
  </svg>
);

const TaskGlow = () => (
  <span className="absolute inset-x-0 bottom-0 h-[2px] bg-[radial-gradient(ellipse_at_bottom,#c8cacc,transparent_70%)]" />
);

const PINNED: [string, ReactNode][] = [
  ["Applications", <Launcher />],
  ["Files", <Folder />],
  ["Terminal", <Terminal />],
  ["Screenshot", <Monitor />],
  ["Blender", <BlenderLogo className="size-8" />],
  ["Blender blueprint", <Blueprint />],
  ["Krita", <Krita />],
  ["Blueprint 1", <BlueprintTilted />],
  ["Red panda", <RedPanda />],
  ["Blueprint 2", <BlueprintTilted />],
  ["Brave", <Brave />],
];

function Taskbar() {
  return (
    <footer className="flex h-[47px] items-center justify-between border-t border-[#6a6e70] bg-[linear-gradient(90deg,#0f1214,#0f1214_20%,#20262a_42%,#171b1e_62%,#101214_80%)] font-['Noto_Sans',sans-serif] text-white">
      <div className="flex h-full items-center">
        <div className="flex gap-[21px] pl-[1px]">
          {PINNED.map(([label, icon]) => (
            <button key={label} aria-label={label}>
              {icon}
            </button>
          ))}
        </div>
        <div className="ml-[62px] flex h-full">
          <button aria-label="Red panda window" className="relative flex h-full w-[50px] items-center justify-center">
            <RedPanda />
            <TaskGlow />
          </button>
          <button aria-label="Terminal window" className="relative flex h-full w-[50px] items-center justify-center">
            <Terminal />
            <Speaker />
            <TaskGlow />
          </button>
          <button
            aria-label="Blender window"
            className="relative flex h-full w-[50px] items-center justify-center bg-[radial-gradient(ellipse_24px_48px_at_50%_100%,#d0d2d4,#6a6e7180_45%,transparent)]"
          >
            <BlueprintTilted />
            <Speaker />
          </button>
        </div>
      </div>
      <div className="flex h-full items-center pr-[18px]">
        <svg viewBox="0 0 24 24" className="size-6" fill="none" stroke="#e8e8e8" strokeWidth="1.300" aria-label="Flame">
          <path d="M2 22c3-4 0-9 4-20 3 4 2 6 1 9l6-7c2 3 0 6-2 9l12-9c-2 9-6 16-14 16-3 0-5 1-7 2zM5 19c3-2 6-6 8-6M7 11l-1 6" />
        </svg>
        <span className="mr-[13px] ml-4 font-['DejaVu_Sans_Mono',monospace] text-lg font-bold text-[#4553a0]">EN</span>
        <Bell size={26} strokeWidth={1.5} aria-label="Notifications" />
        <svg viewBox="0 0 24 24" className="ml-[15px] size-6" aria-label="Lock">
          <path d="M5 11V7q0-5 5-5t5 5v4" fill="none" stroke="#168a3a" strokeWidth="3" />
          <rect x="2" y="10" width="15" height="13" rx="1" fill="#2bd75a" />
          <circle cx="17" cy="18" r="5.500" fill="#2be360" stroke="#101214" />
        </svg>
        <svg viewBox="0 0 26 24" className="ml-[10px] h-6 w-[26px]" fill="none" stroke="#e8e8e8" aria-label="Volume">
          <path d="M2 9h4l5-4v14l-5-4H2z" fill="#e0e0e0" stroke="none" />
          <path d="M14 8q2 4 0 8M17.500 5.500q4 6.500 0 13M21 3q6 9 0 18" strokeWidth="2.200" />
        </svg>
        <svg viewBox="0 0 28 28" className="ml-[14px] size-7" fill="none" stroke="#fff" aria-label="USB">
          <circle cx="14" cy="14" r="12.500" stroke="#a0a0a0" />
          <path d="M3 14h22M8 14l5-6h4M12 14l5 5h3" strokeWidth="1.600" />
          <g fill="#fff" stroke="none">
            <circle cx="3.500" cy="14" r="3" />
            <path d="M24 11l4 3-4 3zM17 17h4v4h-4z" />
            <circle cx="18" cy="8" r="2" />
          </g>
        </svg>
        <svg viewBox="0 0 30 28" className="ml-3 h-7 w-[30px]" fill="none" stroke="#fff" aria-label="Network">
          <rect x="6" y="2" width="17" height="12" strokeWidth="2" />
          <path d="M14.500 15v8M0 23.500h18" strokeWidth="3" />
          <rect x="21" y="21" width="8" height="7" fill="#a0a0a0" stroke="none" />
          <path d="M23 21v-3q2-2 4 0v3" stroke="#a0a0a0" />
        </svg>
        <svg viewBox="0 0 18 9" className="ml-3 h-[9px] w-[18px] fill-white" aria-label="Show hidden icons">
          <path d="M9 0l9 9H0z" />
        </svg>
        <div className="mr-[19px] ml-[18px] w-[71px] text-center">
          <div className="text-lg leading-[18px]">5:23 AM</div>
          <div className="text-sm leading-4">12/6/21</div>
        </div>
        <button aria-label="Show desktop" className="ml-1 flex size-6 items-end border border-white p-[2px]">
          <span className="h-px w-full bg-white" />
        </button>
      </div>
    </footer>
  );
}

export default function App() {
  return (
    <div className="flex h-screen flex-col overflow-hidden bg-[#181818] font-['DejaVu_Sans',sans-serif] text-[13px] leading-5 text-[#dcdcdc]">
      <TitleBar />
      <div className="flex min-h-0 flex-1 flex-col bg-[#181818] [text-shadow:0_1px_1px_#0009]">
        <div className="bg-[#1d1d1d]">
          <TopBar />
        </div>
        <div className="flex min-h-0 flex-1 gap-[3px] pt-[2px] pr-px">
          <ShaderEditor />
          <div className="flex w-[331px] shrink-0 flex-col gap-[3px]">
            <Outliner />
            <Properties />
          </div>
        </div>
        <StatusBar />
      </div>
      <Taskbar />
    </div>
  );
}
